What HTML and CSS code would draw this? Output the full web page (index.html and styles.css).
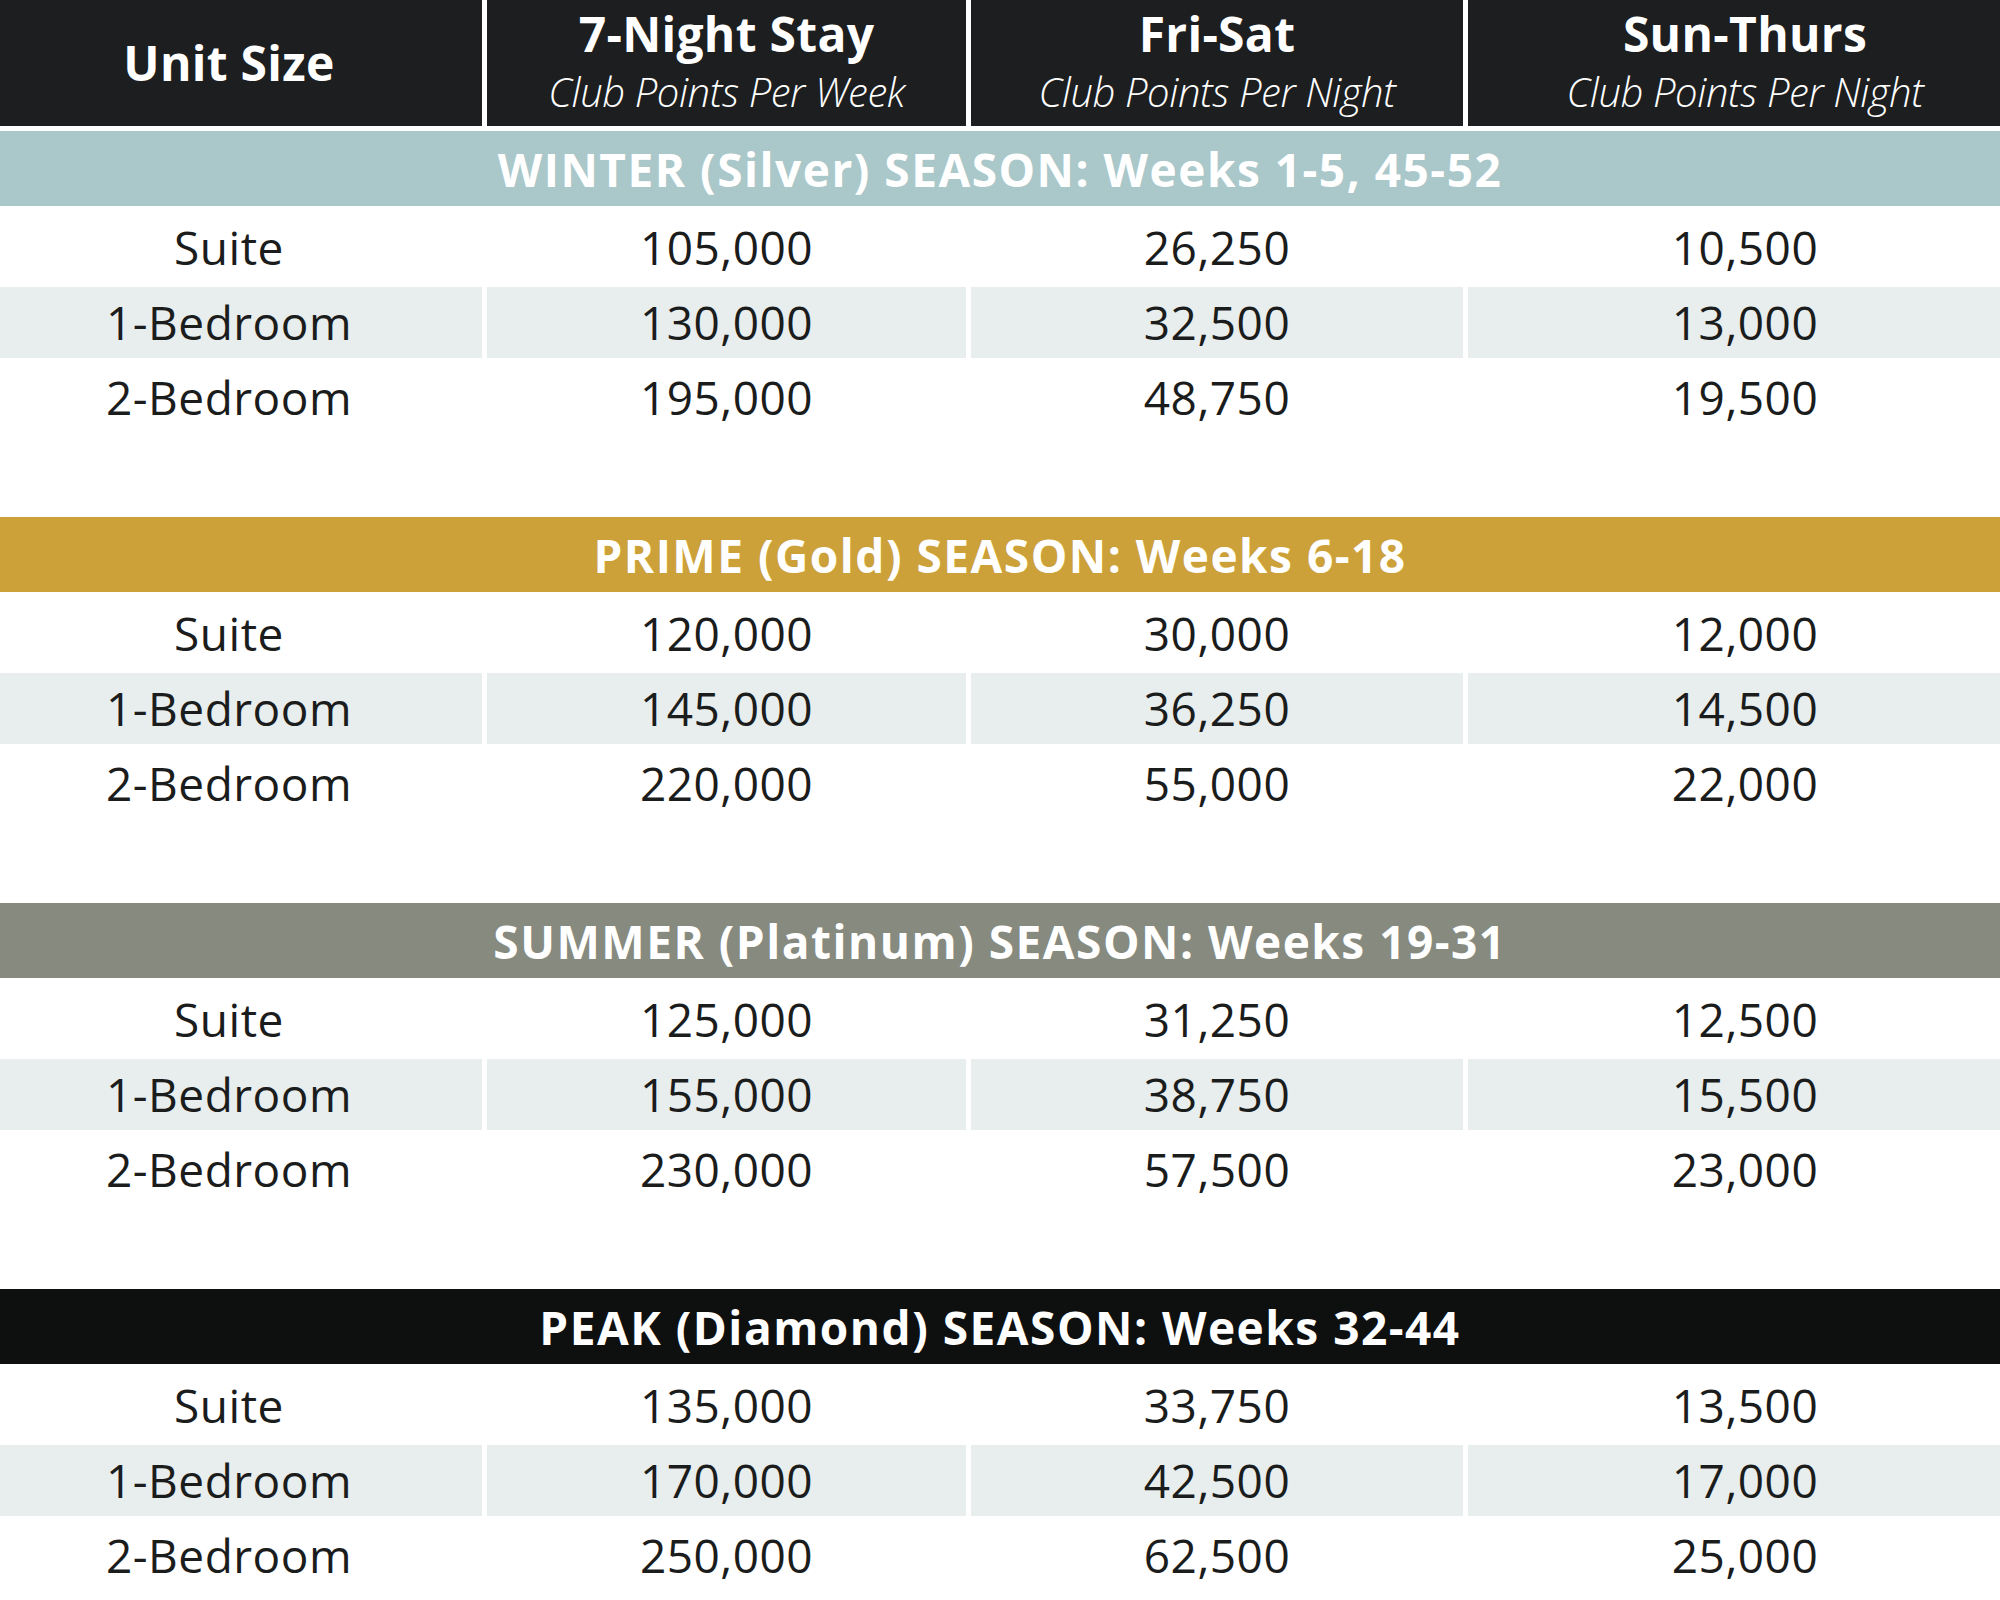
FILE: index.html
```html
<!DOCTYPE html>
<html lang="en">
<head>
<meta charset="utf-8">
<title>Club Points Chart</title>
<link rel="stylesheet" href="styles.css">
</head>
<body>
<div class="chart">
  <div class="head">
    <div class="hcell c1"><span class="title solo">Unit Size</span></div>
    <div class="hcell c2"><span class="title">7-Night Stay</span><span class="sub">Club Points Per Week</span></div>
    <div class="hcell c3"><span class="title">Fri-Sat</span><span class="sub">Club Points Per Night</span></div>
    <div class="hcell c4"><span class="title">Sun-Thurs</span><span class="sub">Club Points Per Night</span></div>
  </div>

  <section class="season">
    <div class="band silver">WINTER (Silver) SEASON: Weeks 1-5, 45-52</div>
    <div class="rows">
      <div class="row"><div class="cell c1">Suite</div><div class="cell c2">105,000</div><div class="cell c3">26,250</div><div class="cell c4">10,500</div></div>
      <div class="row alt"><div class="cell c1">1-Bedroom</div><div class="cell c2">130,000</div><div class="cell c3">32,500</div><div class="cell c4">13,000</div></div>
      <div class="row"><div class="cell c1">2-Bedroom</div><div class="cell c2">195,000</div><div class="cell c3">48,750</div><div class="cell c4">19,500</div></div>
    </div>
  </section>

  <section class="season">
    <div class="band gold">PRIME (Gold) SEASON: Weeks 6-18</div>
    <div class="rows">
      <div class="row"><div class="cell c1">Suite</div><div class="cell c2">120,000</div><div class="cell c3">30,000</div><div class="cell c4">12,000</div></div>
      <div class="row alt"><div class="cell c1">1-Bedroom</div><div class="cell c2">145,000</div><div class="cell c3">36,250</div><div class="cell c4">14,500</div></div>
      <div class="row"><div class="cell c1">2-Bedroom</div><div class="cell c2">220,000</div><div class="cell c3">55,000</div><div class="cell c4">22,000</div></div>
    </div>
  </section>

  <section class="season">
    <div class="band platinum">SUMMER (Platinum) SEASON: Weeks 19-31</div>
    <div class="rows">
      <div class="row"><div class="cell c1">Suite</div><div class="cell c2">125,000</div><div class="cell c3">31,250</div><div class="cell c4">12,500</div></div>
      <div class="row alt"><div class="cell c1">1-Bedroom</div><div class="cell c2">155,000</div><div class="cell c3">38,750</div><div class="cell c4">15,500</div></div>
      <div class="row"><div class="cell c1">2-Bedroom</div><div class="cell c2">230,000</div><div class="cell c3">57,500</div><div class="cell c4">23,000</div></div>
    </div>
  </section>

  <section class="season">
    <div class="band diamond">PEAK (Diamond) SEASON: Weeks 32-44</div>
    <div class="rows">
      <div class="row"><div class="cell c1">Suite</div><div class="cell c2">135,000</div><div class="cell c3">33,750</div><div class="cell c4">13,500</div></div>
      <div class="row alt"><div class="cell c1">1-Bedroom</div><div class="cell c2">170,000</div><div class="cell c3">42,500</div><div class="cell c4">17,000</div></div>
      <div class="row"><div class="cell c1">2-Bedroom</div><div class="cell c2">250,000</div><div class="cell c3">62,500</div><div class="cell c4">25,000</div></div>
    </div>
  </section>
</div>
</body>
</html>
```
FILE: styles.css
```css
html, body {
  margin: 0;
  padding: 0;
  background: #ffffff;
}

body {
  font-family: "Open Sans", "Noto Sans", sans-serif;
  color: #1b1c1c;
}

.chart {
  width: 2000px;
}

.head,
.row {
  display: grid;
  grid-template-columns: 482px 479px 492px 1fr;
  column-gap: 5px;
}

.head {
  height: 126px;
  margin-bottom: 5px;
}

.hcell {
  background: #1c1e1f;
  color: #ffffff;
  display: flex;
  flex-direction: column;
  align-items: center;
  padding-top: 7px;
  box-sizing: border-box;
}

.hcell.c1 {
  padding-top: 0;
}

.title {
  font-weight: 700;
  font-size: 48px;
  line-height: 54px;
  letter-spacing: 0.3px;
}

.title.solo {
  line-height: 126px;
}

.sub {
  font-style: italic;
  font-weight: 300;
  font-size: 40px;
  line-height: 50px;
  margin-top: 6px;
  letter-spacing: -0.4px;
}

.c1 {
  padding-right: 24px;
}

.c4 {
  padding-left: 22px;
}

.band {
  height: 75px;
  box-sizing: border-box;
  padding-top: 2px;
  line-height: 73px;
  text-align: center;
  color: #ffffff;
  font-weight: 700;
  font-size: 46px;
  letter-spacing: 1.5px;
}

.silver { background: #aac7ca; }
.gold { background: #cda13a; }
.platinum { background: #868a7f; }
.diamond { background: #0e1010; }

.rows {
  padding-top: 4px;
  margin-bottom: 82px;
}

.row {
  padding: 2px 0;
}

.cell {
  text-align: center;
  font-size: 46px;
  line-height: 71px;
  font-weight: 400;
  letter-spacing: 0.5px;
}

.row.alt .cell {
  background: #e8eded;
}
```
